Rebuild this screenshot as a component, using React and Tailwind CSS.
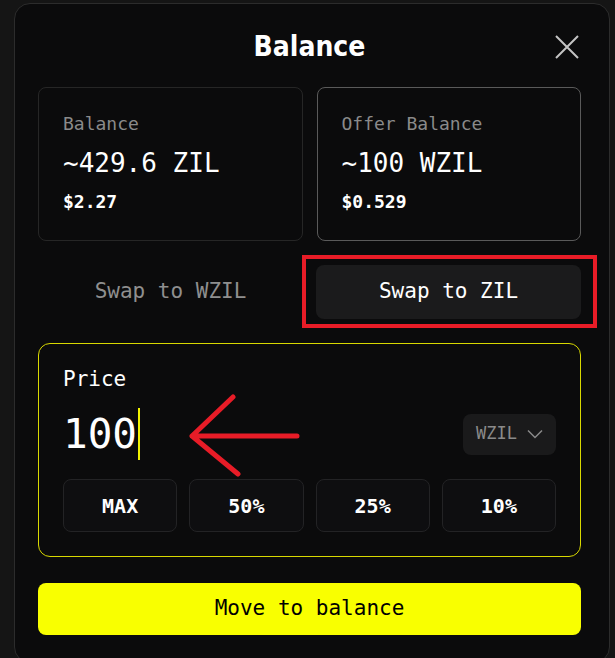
const mono = { fontFamily: '"DejaVu Sans Mono", "Liberation Mono", monospace' };

function BalanceCard({ label, amount, usd, selected }) {
  return (
    <div
      className={`h-[154px] rounded-[8px] border px-[24px] pt-[23px] ${
        selected ? "border-[#5a5a5a]" : "border-[#262626]"
      }`}
    >
      <div className="text-[18px] leading-[26px] text-[#8a8a8a]">{label}</div>
      <div className="mt-[10px] text-[26px] leading-[32px] text-white">{amount}</div>
      <div className="mt-[10px] text-[18px] leading-[26px] font-semibold text-white">{usd}</div>
    </div>
  );
}

export default function App() {
  const percents = ["MAX", "50%", "25%", "10%"];

  return (
    <div className="min-h-[658px] w-[615px] overflow-hidden bg-[#151515] pt-[3px] pl-[14px]" style={mono}>
      <div className="relative h-[660px] w-[596px] rounded-[16px] border border-[#2c2c2c] bg-[#0b0b0c] pl-[23px] pr-[28px]">
        <div className="relative flex justify-center pt-[27px]">
          <h1
            className="text-[28px] leading-[32px] font-bold text-white"
            style={{ fontFamily: '"DejaVu Sans Condensed", "Roboto", sans-serif' }}
          >
            Balance
          </h1>
          <button className="absolute right-[2px] top-[31px] text-[#c4c4c4]">
            <svg width="24" height="24" viewBox="0 0 24 24" fill="none" stroke="currentColor" strokeWidth="2">
              <path d="M1 1L23 23M23 1L1 23" />
            </svg>
          </button>
        </div>

        <div className="mt-[24px] grid grid-cols-2 gap-[14px]">
          <BalanceCard label="Balance" amount="~429.6 ZIL" usd="$2.27" />
          <BalanceCard label="Offer Balance" amount="~100 WZIL" usd="$0.529" selected />
        </div>

        <div className="mt-[24px] grid grid-cols-2 gap-[13px]">
          <button className="h-[54px] rounded-[8px] text-[21px] text-[#8f8f8f]">Swap to WZIL</button>
          <div className="relative">
            <button className="h-[54px] w-full rounded-[8px] bg-[#1b1b1c] text-[21px] text-white">Swap to ZIL</button>
            <div className="pointer-events-none absolute -left-[14px] -right-[16px] -top-[10px] -bottom-[9px] border-[4px] border-[#e81c27]" />
          </div>
        </div>

        <div className="relative mt-[24px] rounded-[12px] border border-[#d9d900] px-[24px] pt-[22px] pb-[24px]">
          <div className="text-[21px] leading-[26px] text-white">Price</div>
          <div className="mt-[16px] flex h-[52px] items-center justify-between">
            <div className="flex items-center">
              <span className="text-[41px] leading-[52px] text-white">100</span>
              <span className="ml-[1px] h-[52px] w-[2px] bg-[#f2f200]" />
            </div>
            <div className="flex h-[41px] w-[93px] items-center justify-center gap-[10px] rounded-[8px] bg-[#1a1a1b] text-[17px] text-[#8a8a8a]">
              WZIL
              <svg width="16" height="10" viewBox="0 0 16 10" fill="none" stroke="currentColor" strokeWidth="1.5">
                <path d="M1 1.5L8 8.5L15 1.5" />
              </svg>
            </div>
          </div>
          <div className="mt-[19px] grid grid-cols-4 gap-[12px]">
            {percents.map((p) => (
              <button
                key={p}
                className="h-[53px] rounded-[8px] border border-[#232325] bg-[#0e0e10] text-[20px] font-semibold text-white"
              >
                {p}
              </button>
            ))}
          </div>
          <svg
            className="pointer-events-none absolute left-[145px] top-[50px]"
            width="120"
            height="84"
            viewBox="0 0 120 84"
            fill="none"
            stroke="#e81c27"
            strokeWidth="5"
            strokeLinecap="round"
            strokeLinejoin="round"
          >
            <path d="M8 42H113M8 42L49 3M8 42L54 80" />
          </svg>
        </div>

        <button className="mt-[26px] h-[52px] w-full rounded-[8px] bg-[#f9ff00] text-[21px] text-black">
          Move to balance
        </button>
      </div>
    </div>
  );
}
